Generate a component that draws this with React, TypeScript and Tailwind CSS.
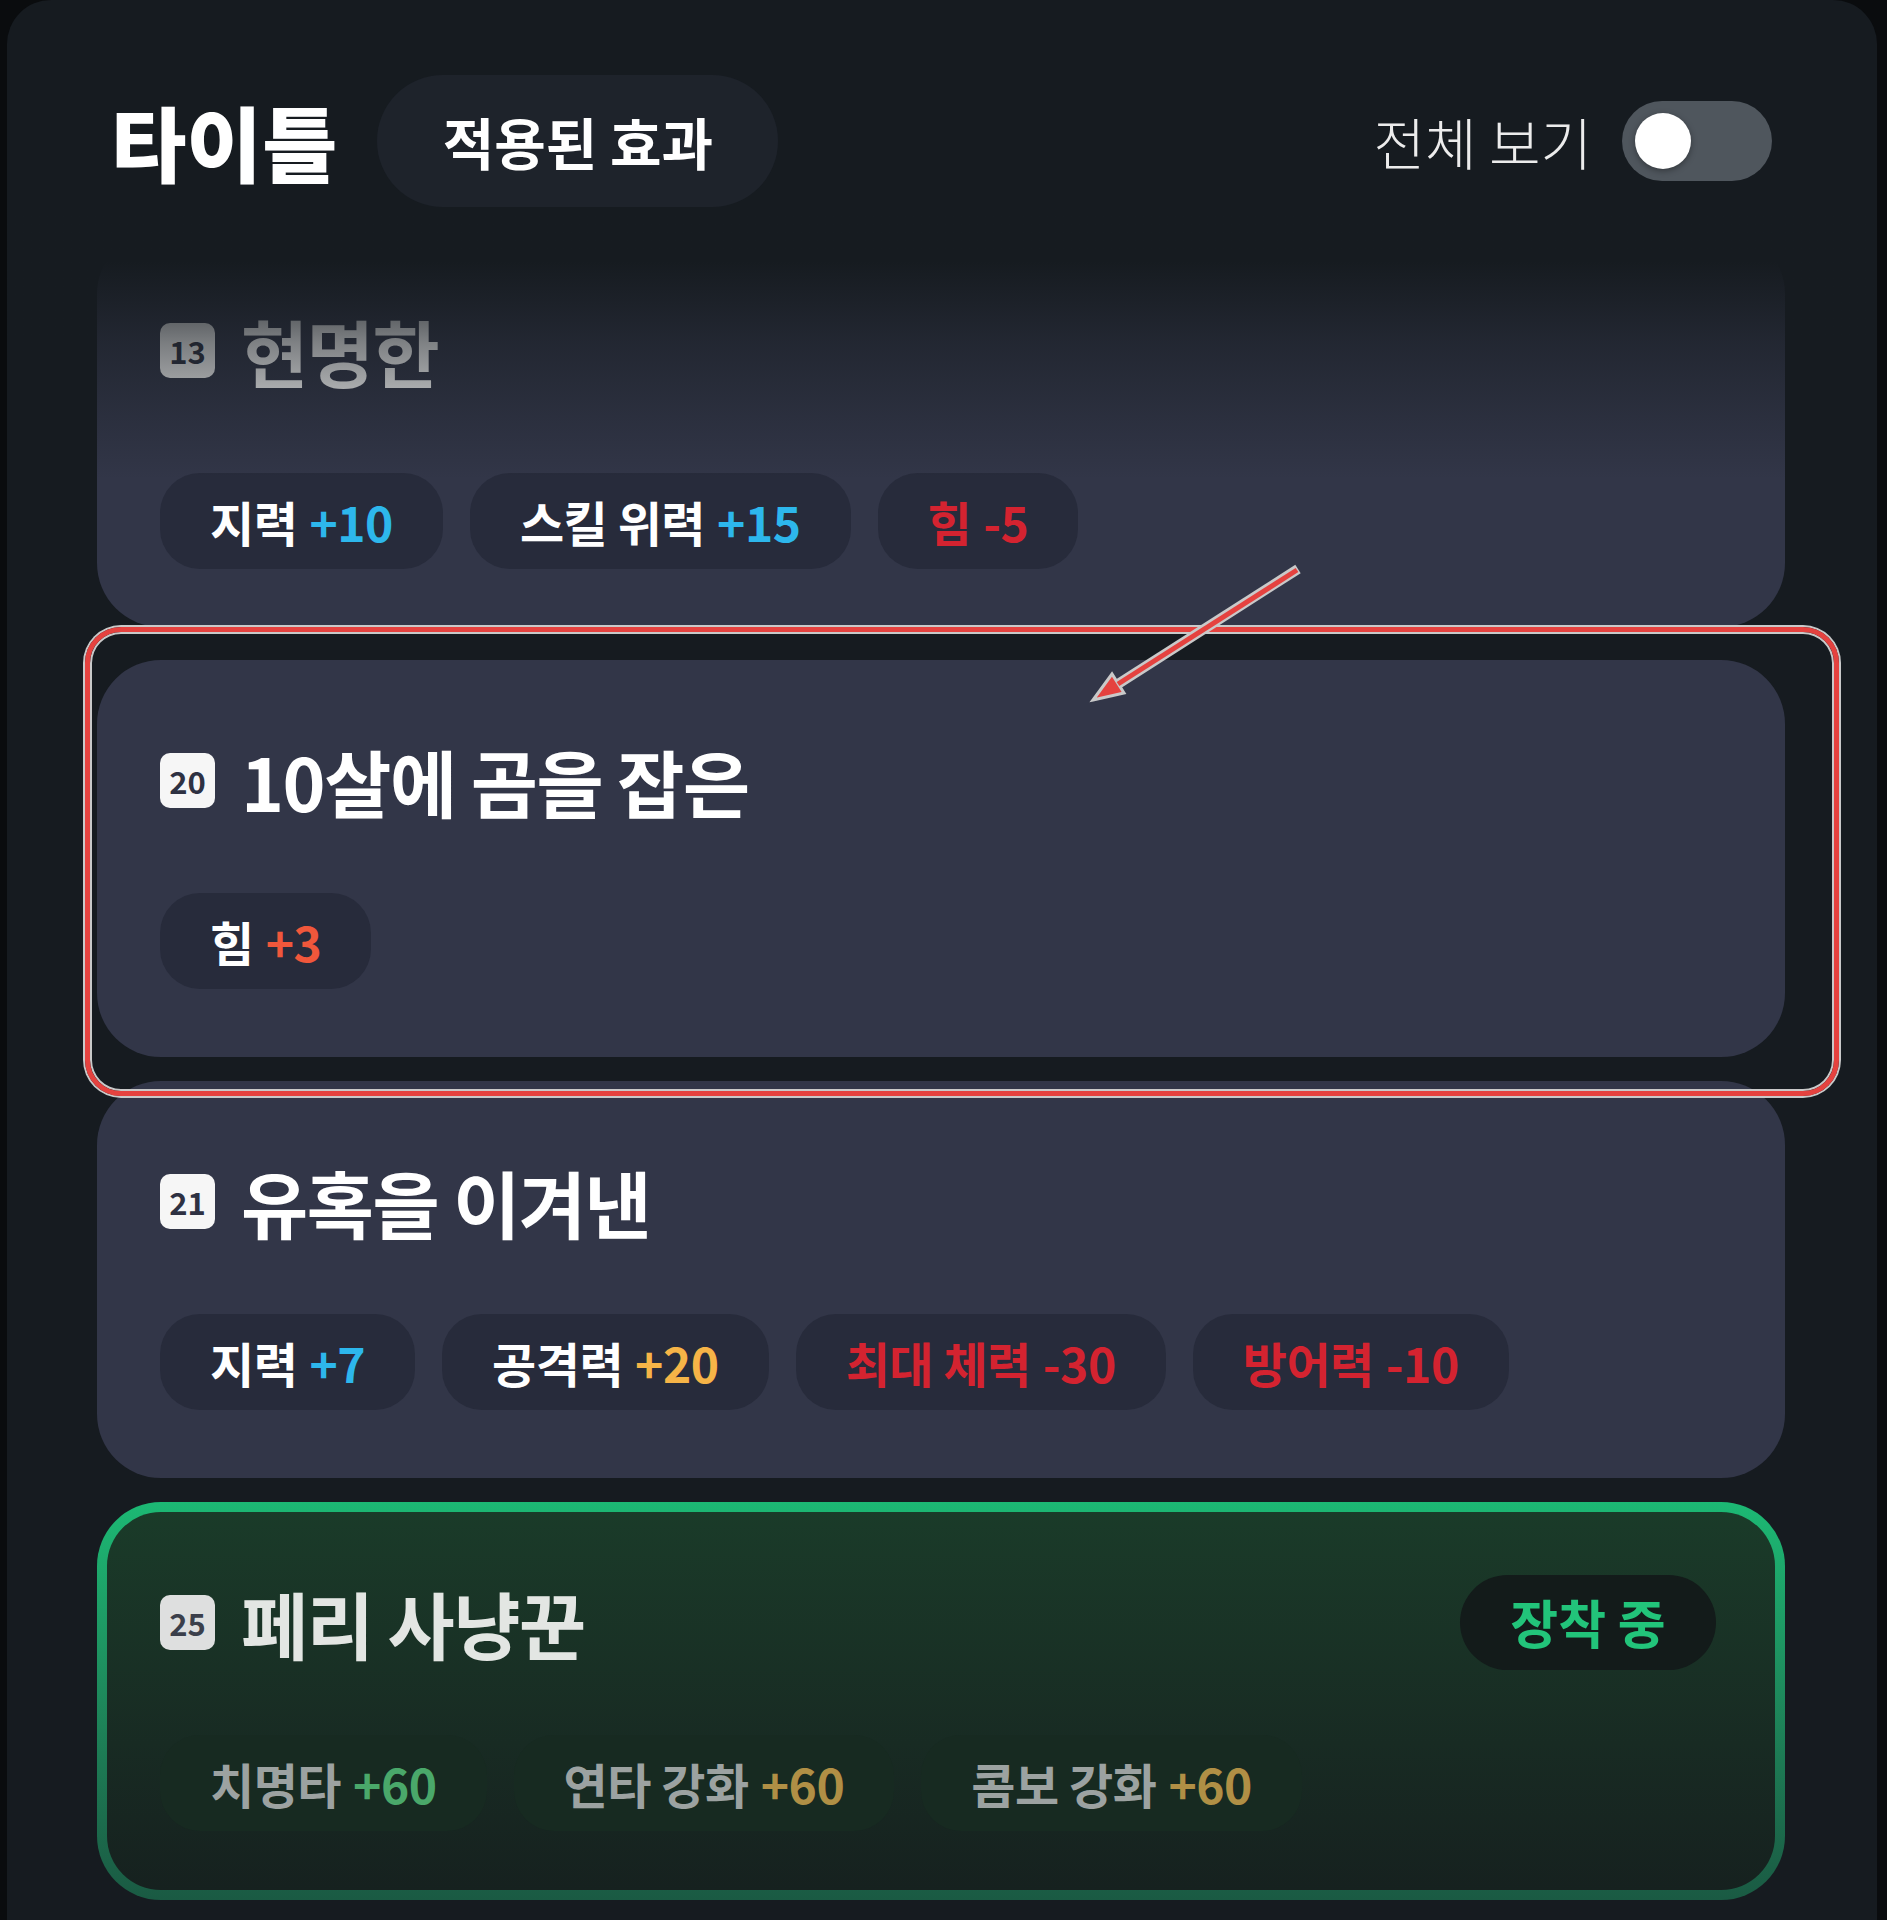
import React from 'react'

type Tone = 'blue' | 'red' | 'orange' | 'gold' | 'green' | 'dimGold'

interface Effect {
  label: string
  value: string
  tone: Tone
}

interface TitleItem {
  level: number
  name: string
  effects: Effect[]
  equipped?: boolean
}

const toneClass: Record<Tone, string> = {
  blue: 'text-[#2db7ec]',
  red: 'text-[#d42330]',
  orange: 'text-[#f0573b]',
  gold: 'text-[#f6b447]',
  green: 'text-[#4aa86a]',
  dimGold: 'text-[#b08f45]',
}

const titles: TitleItem[] = [
  {
    level: 13,
    name: '현명한',
    effects: [
      { label: '지력', value: '+10', tone: 'blue' },
      { label: '스킬 위력', value: '+15', tone: 'blue' },
      { label: '힘', value: '-5', tone: 'red' },
    ],
  },
  {
    level: 20,
    name: '10살에 곰을 잡은',
    effects: [{ label: '힘', value: '+3', tone: 'orange' }],
  },
  {
    level: 21,
    name: '유혹을 이겨낸',
    effects: [
      { label: '지력', value: '+7', tone: 'blue' },
      { label: '공격력', value: '+20', tone: 'gold' },
      { label: '최대 체력', value: '-30', tone: 'red' },
      { label: '방어력', value: '-10', tone: 'red' },
    ],
  },
  {
    level: 25,
    name: '페리 사냥꾼',
    equipped: true,
    effects: [
      { label: '치명타', value: '+60', tone: 'green' },
      { label: '연타 강화', value: '+60', tone: 'dimGold' },
      { label: '콤보 강화', value: '+60', tone: 'dimGold' },
    ],
  },
]

function EffectChip({ effect, dim }: { effect: Effect; dim?: boolean }) {
  const negative = effect.value.startsWith('-')
  const labelClass = negative ? 'text-[#d42330]' : dim ? 'text-[#9ca2a1]' : 'text-white'
  return (
    <div
      className={`flex h-[96px] items-center rounded-[40px] px-[50px] text-[48px] font-bold leading-none tracking-[-0.01em] ${
        dim ? 'bg-[#172a21]' : 'bg-[#272b3b]'
      }`}
    >
      <span className={labelClass}>{effect.label}</span>
      <span className={`ml-[12px] ${toneClass[effect.tone]}`}>{effect.value}</span>
    </div>
  )
}

function LevelBadge({ level, muted }: { level: number; muted?: boolean }) {
  return (
    <div
      className={`grid h-[55px] w-[55px] place-items-center rounded-[10px] text-[31px] font-bold leading-none ${
        muted ? 'bg-[#dedfdf] text-[#3b3f4b]' : 'bg-[#f6f6f6] text-[#2e3142]'
      }`}
    >
      {level}
    </div>
  )
}

function CardBody({ item, chipGap = 'mt-[73px]' }: { item: TitleItem; chipGap?: string }) {
  return (
    <>
      <div className="flex h-[80px] items-center justify-between">
        <div className="flex items-center gap-[26px]">
          <LevelBadge level={item.level} muted={item.equipped} />
          <h3
            className={`text-[73px] font-bold leading-none tracking-[-0.02em] ${
              item.equipped ? 'text-[#e3e6e3]' : 'text-white'
            }`}
          >
            {item.name}
          </h3>
        </div>
        {item.equipped && (
          <div className="flex h-[95px] w-[256px] shrink-0 items-center justify-center rounded-full bg-[#131b1a] text-[52px] font-bold text-[#22c47a]">
            장착 중
          </div>
        )}
      </div>
      <div className={`${chipGap} flex gap-[27px]`}>
        {item.effects.map((e) => (
          <EffectChip key={e.label} effect={e} dim={item.equipped} />
        ))}
      </div>
    </>
  )
}

function TitleCard({ item, chipGap }: { item: TitleItem; chipGap?: string }) {
  if (item.equipped) {
    return (
      <div className="h-[398px] w-[1688px] rounded-[64px] bg-gradient-to-b from-[#1cb974] to-[#1a5a43] p-[10px]">
        <div className="flex h-full flex-col rounded-[54px] bg-gradient-to-b from-[#1a3b29] to-[#16211f] pl-[53px] pr-[59px] pt-[70px]">
          <CardBody item={item} chipGap={chipGap} />
        </div>
      </div>
    )
  }
  return (
    <div className="flex h-[397px] w-[1688px] flex-col rounded-[64px] bg-[#323648] pl-[63px] pr-[69px] pt-[80px]">
      <CardBody item={item} chipGap={chipGap} />
    </div>
  )
}

export default function App() {
  return (
    <div className="relative h-[1920px] w-[1887px] overflow-hidden bg-[#0a0c0e] font-['Noto_Sans_CJK_KR','Noto_Sans',sans-serif]">
      <div className="ml-[7px] h-[1920px] w-[1870px] rounded-t-[44px] bg-[#161b20] pt-[75px]">
        {/* header */}
        <header className="flex h-[132px] items-center justify-between pl-[104px] pr-[105px]">
          <div className="flex items-center gap-[40px]">
            <h1 className="text-[82px] font-black leading-none text-white">타이틀</h1>
            <div className="flex h-[132px] w-[401px] items-center justify-center rounded-full bg-[#1e232b] text-[56px] font-bold text-white">
              적용된 효과
            </div>
          </div>
          <div className="flex items-center gap-[30px]">
            <span className="text-[56px] font-light text-[#ececec]">전체 보기</span>
            <div className="flex h-[80px] w-[150px] items-center rounded-full bg-[#4f565d] pl-[13px]">
              <div className="h-[56px] w-[56px] rounded-full bg-white shadow-[0_2px_6px_rgba(0,0,0,0.35)]" />
            </div>
          </div>
        </header>

        {/* title list */}
        <div className="mt-[23px] flex flex-col gap-6 pl-[90px]">
          <div className="mb-[9px]">
            <TitleCard item={titles[0]} chipGap="mt-[83px]" />
          </div>
          <TitleCard item={titles[1]} />
          <TitleCard item={titles[2]} />
          <TitleCard item={titles[3]} />
        </div>
      </div>

      {/* fade under the header */}
      <div className="absolute left-[7px] top-[207px] h-[272px] w-[1870px] bg-gradient-to-b from-[#161b20] from-20% via-[#161b20]/55 via-50% to-transparent" />

      {/* highlight annotation */}
      <div className="absolute left-[85px] top-[627px] h-[469px] w-[1754px] rounded-[36px] border-[5px] border-[#e5423f] shadow-[0_0_0_2px_#c9c9c9,inset_0_0_0_2px_#c9c9c9]" />
      <svg className="absolute left-[1080px] top-[550px]" width="240" height="170" viewBox="0 0 240 170">
        <line x1="218" y1="19" x2="38" y2="134" stroke="#c9c9c9" strokeWidth="10" strokeLinecap="butt" />
        <polygon points="13,150 44,143 32,124" fill="#e5423f" stroke="#c9c9c9" strokeWidth="3" strokeLinejoin="miter" />
        <line x1="217" y1="20" x2="38" y2="134" stroke="#e5423f" strokeWidth="5" />
      </svg>
    </div>
  )
}
